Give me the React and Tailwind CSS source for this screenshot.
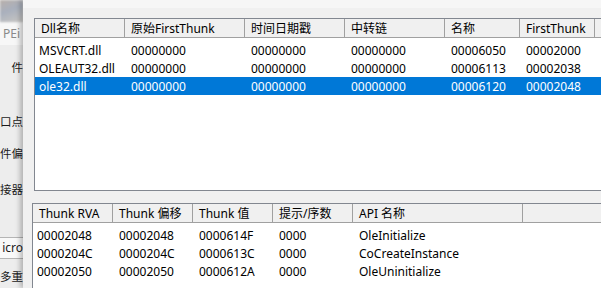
import React from 'react';

const font = "font-['Noto_Sans','Noto_Sans_CJK_SC',sans-serif]";

const topCols = [
  { title: 'Dll名称', w: 'w-[90px]' },
  { title: '原始FirstThunk', w: 'w-[120px]' },
  { title: '时间日期戳', w: 'w-[100px]' },
  { title: '中转链', w: 'w-[100px]' },
  { title: '名称', w: 'w-[75px]' },
  { title: 'FirstThunk', w: 'w-[75px]' },
];

const topRows = [
  ['MSVCRT.dll', '00000000', '00000000', '00000000', '00006050', '00002000'],
  ['OLEAUT32.dll', '00000000', '00000000', '00000000', '00006113', '00002038'],
  ['ole32.dll', '00000000', '00000000', '00000000', '00006120', '00002048'],
];

const bottomCols = [
  { title: 'Thunk RVA', w: 'w-[80px]' },
  { title: 'Thunk 偏移', w: 'w-[80px]' },
  { title: 'Thunk 值', w: 'w-[80px]' },
  { title: '提示/序数', w: 'w-[80px]' },
  { title: 'API 名称', w: 'w-[170px]' },
];

const bottomRows = [
  ['00002048', '00002048', '0000614F', '0000', 'OleInitialize'],
  ['0000204C', '0000204C', '0000613C', '0000', 'CoCreateInstance'],
  ['00002050', '00002050', '0000612A', '0000', 'OleUninitialize'],
];

function Header({ cols }) {
  return (
    <div className="flex h-[19px] shrink-0 border-b border-[#a0a0a0] bg-[#f0f0f0]">
      {cols.map((c) => (
        <div
          key={c.title}
          className={`${c.w} shrink-0 border-r border-[#a0a0a0] pl-[6px] leading-[19px] whitespace-nowrap overflow-hidden`}
        >
          {c.title}
        </div>
      ))}
      <div className="flex-1" />
    </div>
  );
}

function Rows({ cols, rows, selected }) {
  return (
    <div className="pt-[3px]">
      {rows.map((r, i) => (
        <div
          key={i}
          className={`flex h-[18px] leading-[19px] ${i === selected ? 'bg-[#0078d7] text-white' : ''}`}
        >
          {r.map((cell, j) => (
            <div
              key={j}
              className={`${cols[j].w} shrink-0 whitespace-nowrap overflow-hidden ${j === 0 ? 'pl-[4px]' : 'pl-[6px]'}`}
            >
              {cell}
            </div>
          ))}
        </div>
      ))}
    </div>
  );
}

// background window peeking out on the left
function LeftStrip() {
  return (
    <div className="w-[23px] shrink-0 h-full flex flex-col bg-[#ededed] text-[#1a1a1a] text-[11.5px] overflow-hidden">
      <div className="h-[22px] shrink-0 bg-[linear-gradient(160deg,#b9b1ab_0%,#a9b0bd_45%,#c9c7c4_100%)] blur-[1px]" />
      <div className="h-[23px] shrink-0 bg-[#f7f7f7] text-[#8a8a8a] pl-[3px] leading-[23px] whitespace-nowrap text-[12px]">PEi</div>
      <div className="h-[14px] shrink-0" />
      <div className="h-[20px] shrink-0 flex justify-end whitespace-nowrap">件</div>
      <div className="h-[34px] shrink-0" />
      <div className="h-[20px] shrink-0 flex justify-end whitespace-nowrap">口点</div>
      <div className="h-[12px] shrink-0" />
      <div className="h-[20px] shrink-0 flex justify-end whitespace-nowrap">件偏</div>
      <div className="h-[16px] shrink-0" />
      <div className="h-[20px] shrink-0 flex justify-end whitespace-nowrap">接器</div>
      <div className="h-[36px] shrink-0" />
      <div className="h-[22px] shrink-0 bg-[#f9f9f9] border-y border-[#b5b5b5] flex items-center justify-end whitespace-nowrap text-[12px]">icro</div>
      <div className="h-[9px] shrink-0" />
      <div className="h-[20px] shrink-0 flex justify-end whitespace-nowrap">多重</div>
    </div>
  );
}

export default function App() {
  return (
    <div className={`w-[601px] h-[288px] flex overflow-hidden bg-[#f0f0f0] text-[12px] text-black ${font}`}>
      <LeftStrip />
      <div className="relative flex-1 h-full flex flex-col bg-[#f0f0f0] shadow-[-3px_0_5px_rgba(0,0,0,0.25)] overflow-hidden">
        <div className="h-[8px] shrink-0 bg-[#f6f6f6]" />
        <div className="h-[10px] shrink-0" />
        {/* top list: imported DLLs */}
        <div className="ml-[11px] w-[620px] h-[173px] shrink-0 border border-[#828790] bg-white flex flex-col">
          <Header cols={topCols} />
          <Rows cols={topCols} rows={topRows} selected={2} />
        </div>
        <div className="h-[12px] shrink-0" />
        {/* bottom list: thunks */}
        <div className="ml-[9px] w-[620px] flex-1 border-l border-t border-[#828790] bg-white flex flex-col">
          <Header cols={bottomCols} />
          <Rows cols={bottomCols} rows={bottomRows} selected={-1} />
        </div>
      </div>
    </div>
  );
}
